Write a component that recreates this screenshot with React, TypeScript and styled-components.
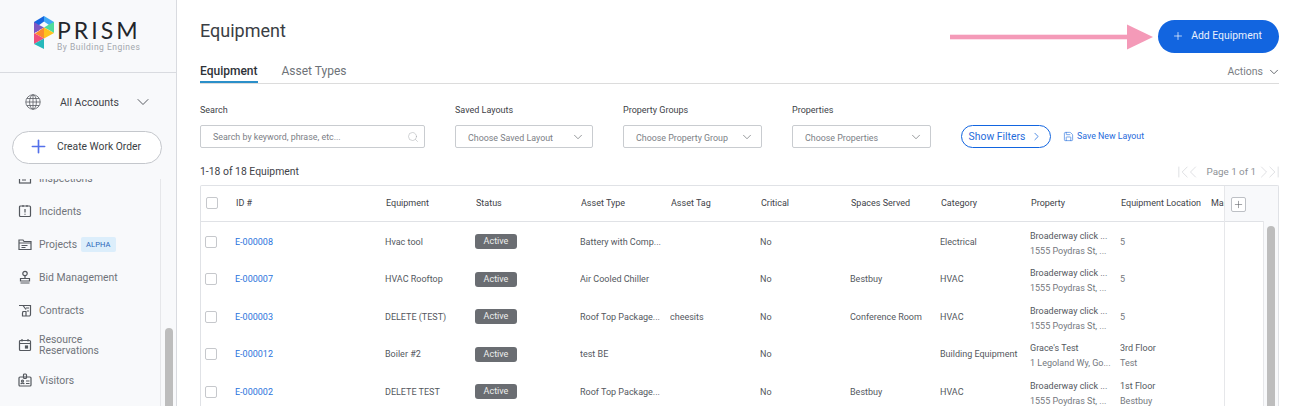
import React from "react";
import styled, { createGlobalStyle } from "styled-components";
import { ChevronDown, ChevronRight, ChevronLeft, ChevronFirst, ChevronLast, Plus, Search, Save } from "lucide-react";

const Global = createGlobalStyle`
  html, body { margin: 0; padding: 0; height: 406px; overflow: hidden; background: #fff; }
  body { font-family: Roboto, "Liberation Sans", sans-serif; color: #3a3f47; }
  * { box-sizing: border-box; }
`;

const Page = styled.div`
  display: flex;
  width: 1297px;
  height: 406px;
  overflow: hidden;
`;

const Sidebar = styled.aside`
  width: 177px;
  flex: none;
  display: flex;
  flex-direction: column;
  background: #f8f9fb;
  border-right: 1px solid #d9dbe0;
`;

const LogoArea = styled.div`
  height: 73px;
  flex: none;
  border-bottom: 1px solid #d9dbe0;
  display: flex;
  align-items: flex-start;
  padding: 16px 0 0 34px;
  gap: 3px;
`;

const LogoText = styled.div`
  display: flex;
  flex-direction: column;
`;

const LogoName = styled.span`
  font-family: Lato, sans-serif;
  font-size: 23px;
  line-height: 23px;
  margin-top: 3px;
  letter-spacing: 3px;
  color: #23262b;
`;

const LogoSub = styled.span`
  font-size: 8.5px;
  line-height: 9px;
  margin-top: 1px;
  letter-spacing: 0.5px;
  color: #a3a7ad;
  white-space: nowrap;
`;

const AccountRow = styled.div`
  height: 58px;
  flex: none;
  display: flex;
  align-items: center;
  padding-left: 25px;
  font-size: 10.5px;
  color: #3e4248;
`;

const GlobeIcon = styled.svg`
  width: 16px;
  height: 16px;
  flex: none;
  fill: none;
  stroke: #5a5e64;
  stroke-width: 0.8;
`;

const AccountName = styled.span`
  margin-left: 19px;
  width: 73px;
`;

const CreateWrap = styled.div`
  padding-left: 12px;
  flex: none;
`;

const CreateButton = styled.button`
  width: 150px;
  height: 33px;
  border-radius: 17px;
  border: 1px solid #c4c7cc;
  background: #fff;
  display: flex;
  align-items: center;
  padding: 0 0 2px 15px;
  font: 400 10.3px Roboto, sans-serif;
  color: #3a3e44;
  gap: 8px;
`;

const NavArea = styled.div`
  margin-top: 15px;
  height: 227px;
  flex: none;
  display: flex;
  overflow: hidden;
`;

const NavList = styled.nav`
  width: 161px;
  flex: none;
  border-right: 1px solid #e6e7ea;
  padding-left: 18px;
  display: flex;
  flex-direction: column;
`;

const NavScroller = styled.div`
  margin-top: -18px;
  display: flex;
  flex-direction: column;
`;

const NavItem = styled.div<{ $h: number }>`
  height: ${(p) => p.$h}px;
  flex: none;
  display: flex;
  align-items: center;
  gap: 7px;
  font-size: 10.4px;
  color: #70747a;
  line-height: 11px;
`;

const NavIcon = styled.svg`
  width: 14px;
  height: 14px;
  flex: none;
  fill: none;
  stroke: #54585e;
  stroke-width: 1.2;
`;

const Alpha = styled.span`
  background: #dceefb;
  color: #2a66b8;
  font-size: 7.5px;
  letter-spacing: 0.1px;
  padding: 0 5px;
  height: 15px;
  line-height: 15px;
  border-radius: 2px;
  margin-left: -3px;
`;

const NavTrack = styled.div`
  flex: 1;
  padding: 149px 0 0 4px;
`;

const NavThumb = styled.div`
  width: 8px;
  height: 90px;
  border-radius: 4px 4px 0 0;
  background: #bdbdbd;
`;

const Main = styled.main`
  flex: 1;
  min-width: 0;
  padding: 0 18px 0 23px;
  display: flex;
  flex-direction: column;
`;

const TitleRow = styled.div`
  height: 53px;
  flex: none;
  padding-top: 20px;
  display: flex;
  justify-content: space-between;
  align-items: flex-start;
`;

const Title = styled.h1`
  margin: 0;
  font-size: 18px;
  font-weight: 400;
  line-height: 21px;
  color: #3a3e44;
`;

const TitleActions = styled.div`
  display: flex;
  align-items: flex-start;
  gap: 5px;
`;

const Arrow = styled.svg`
  width: 203px;
  height: 28px;
  margin-top: 2.5px;
`;

const AddButton = styled.button`
  width: 121px;
  height: 33px;
  border: 0;
  border-radius: 17px;
  background: #1265e0;
  color: #e9f1fd;
  font: 400 10.4px Roboto, sans-serif;
  display: flex;
  align-items: center;
  justify-content: center;
  gap: 7px;
  padding: 0 3px 2px 0;
`;

const Tabs = styled.div`
  height: 31px;
  flex: none;
  display: flex;
  border-bottom: 1px solid #dcdcdc;
  align-items: flex-start;
  padding-top: 9px;
`;

const Tab = styled.div<{ $active?: boolean }>`
  font-size: 12px;
  line-height: 18px;
  height: 21px;
  margin-right: 24px;
  color: ${(p) => (p.$active ? "#2e3238" : "#6e7278")};
  font-weight: ${(p) => (p.$active ? 500 : 400)};
  border-bottom: ${(p) => (p.$active ? "2px solid #2b8fc9" : "none")};
`;

const Actions = styled.div`
  margin: 1px -2px 0 auto;
  font-size: 10.5px;
  line-height: 18px;
  color: #7a7e84;
  display: flex;
  align-items: center;
  gap: 4px;
`;

const Filters = styled.div`
  height: 79px;
  flex: none;
  display: flex;
  align-items: flex-start;
  padding-top: 20px;
`;

const Field = styled.div<{ $w: number; $mr: number }>`
  width: ${(p) => p.$w}px;
  margin-right: ${(p) => p.$mr}px;
  flex: none;
`;

const Label = styled.div`
  font-size: 9px;
  line-height: 12px;
  color: #3e4248;
  margin-bottom: 9px;
`;

const InputBox = styled.div<{ $search?: boolean }>`
  height: 23px;
  border: 1px solid #c9ccd0;
  border-radius: 2px;
  display: flex;
  align-items: center;
  justify-content: space-between;
  padding: 0 ${(p) => (p.$search ? 5.5 : 7)}px 0 12px;
  font-size: 8.9px;
  color: #7c8086;
`;

const SelectText = styled.span`
  padding-top: 2px;
`;

const ShowFilters = styled.button`
  width: 90px;
  height: 23px;
  margin: 21px 12px 0 0;
  border-radius: 12px;
  border: 1px solid #1265e0;
  background: #fff;
  color: #1f6bdb;
  font: 400 10.4px Roboto, sans-serif;
  display: flex;
  align-items: center;
  justify-content: center;
  gap: 5px;
  padding: 0 0 1px;
  flex: none;
`;

const SaveLink = styled.div`
  margin-top: 21px;
  height: 23px;
  padding-bottom: 1px;
  display: flex;
  align-items: center;
  gap: 3px;
  font-size: 8.8px;
  color: #1f6bdb;
`;

const CountRow = styled.div`
  height: 17px;
  flex: none;
  display: flex;
  align-items: center;
  justify-content: space-between;
  font-size: 10.4px;
  color: #3e4248;
`;

const Pager = styled.div`
  display: flex;
  align-items: center;
  font-size: 9.8px;
  color: #8d9196;
  svg { margin: 0 -5px; }
`;

const PageText = styled.span`
  margin: 0 3px 0 9px;
`;

const TableFrame = styled.div`
  margin-top: 5px;
  flex: 1;
  display: flex;
  border: 1px solid #e0e2e6;
  border-bottom: 0;
  border-radius: 2px 2px 0 0;
  overflow: hidden;
  min-height: 0;
`;

const TableArea = styled.div`
  width: 1023px;
  flex: none;
  overflow: hidden;
`;

const gridCols = "35px 150px 90px 105px 90px 90px 90px 90px 90px 90px 90px 90px";

const HeaderRow = styled.div`
  display: grid;
  grid-template-columns: ${gridCols};
  height: 36px;
  border-bottom: 1px solid #e0e2e6;
  align-items: center;
  font-size: 9px;
  color: #3e4248;
  padding-bottom: 1px;
  width: 1120px;
`;

const TableBody = styled.div`
  padding-top: 1px;
  margin-left: -1px;
`;

const BodyRow = styled.div`
  display: grid;
  grid-template-columns: ${gridCols};
  height: 37.5px;
  align-items: center;
  font-size: 9px;
  color: #54585e;
  width: 1120px;
`;

const Cell = styled.div`
  white-space: nowrap;
  overflow: hidden;
`;

const CheckCell = styled.div`
  padding-left: 5px;
`;

const Check = styled.div`
  width: 12px;
  height: 12px;
  border: 1px solid #c6c8cc;
  border-radius: 2px;
  background: #fff;
`;

const IdLink = styled.span`
  color: #2b74dc;
`;

const Badge = styled.span`
  display: inline-block;
  width: 42px;
  height: 15px;
  line-height: 15px;
  border-radius: 3px;
  text-align: center;
  background: #6a6d72;
  color: #eceded;
  font-size: 9px;
`;

const TwoLine = styled.div`
  display: flex;
  flex-direction: column;
  gap: 4px;
  line-height: 11px;
  padding-top: 4px;
`;

const Faded = styled.span`
  color: #74787e;
`;

const Pinned = styled.div`
  flex: 1;
  display: flex;
  flex-direction: column;
  border-left: 1px solid #e6e7ea;
`;

const PinnedHead = styled.div`
  height: 35px;
  flex: none;
  background: #f8f9fb;
  display: flex;
  align-items: center;
  padding: 2px 0 0 6px;
`;

const PlusBox = styled.div`
  width: 15px;
  height: 15px;
  border: 1px solid #bdc0c5;
  border-radius: 2px;
  background: #fff;
  color: #54585e;
  display: flex;
  align-items: center;
  justify-content: center;
`;

const PinnedBody = styled.div`
  flex: 1;
  display: flex;
`;

const PinnedSpacer = styled.div`
  flex: 1;
  border-top: 1px solid #e0e2e6;
`;

const TableTrack = styled.div`
  width: 15px;
  flex: none;
  border-left: 1px solid #e6e7ea;
  background: #f8f9fb;
  padding: 5px 3px 0;
`;

const TableThumb = styled.div`
  height: 100%;
  width: 8px;
  background: #bdbdbd;
  border-radius: 4px 4px 0 0;
`;

const PathList = ({ children }: { children: React.ReactNode }) => <NavIcon viewBox="0 0 14 14">{children}</NavIcon>;

const Logo = () => (
  <svg width="20" height="33" viewBox="0 0 20 33">
    <polygon points="0,6 10,0 10,5.5 4.5,9.5 0,11.5" fill="#1565e0" />
    <polygon points="10,0 20,6 20,11 15,9 10,5.5" fill="#3fa9f5" />
    <polygon points="0,6 0,17 5,14.5 5,9" fill="#7e57c2" />
    <polygon points="20,6 20,17 15,14 10,11.5 15,8.5" fill="#4fdc9c" />
    <polygon points="0,17 10,11.5 5,9 0,12" fill="#7e57c2" />
    <polygon points="1,17.5 10,11.5 10,22.5" fill="#fb8c2c" />
    <polygon points="10,11.5 20,17 10,22.5" fill="#ffc21c" />
    <polygon points="0,17 10,22.5 0,28" fill="#f0507a" />
    <polygon points="10,22.5 10,33 0,28" fill="#26b8bb" />
  </svg>
);

type Row = {
  id: string; eq: string; type: string; tag?: string; spaces?: string; cat: string;
  p1: string; p2: string; l1: string; l2?: string;
};

const rows: Row[] = [
  { id: "E-000008", eq: "Hvac tool", type: "Battery with Comp...", cat: "Electrical", p1: "Broaderway click ...", p2: "1555 Poydras St, ...", l1: "5" },
  { id: "E-000007", eq: "HVAC Rooftop", type: "Air Cooled Chiller", spaces: "Bestbuy", cat: "HVAC", p1: "Broaderway click ...", p2: "1555 Poydras St, ...", l1: "5" },
  { id: "E-000003", eq: "DELETE (TEST)", type: "Roof Top Package...", tag: "cheesits", spaces: "Conference Room", cat: "HVAC", p1: "Broaderway click ...", p2: "1555 Poydras St, ...", l1: "5" },
  { id: "E-000012", eq: "Boiler #2", type: "test BE", cat: "Building Equipment", p1: "Grace's Test", p2: "1 Legoland Wy, Go...", l1: "3rd Floor", l2: "Test" },
  { id: "E-000002", eq: "DELETE TEST", type: "Roof Top Package...", spaces: "Bestbuy", cat: "HVAC", p1: "Broaderway click ...", p2: "1555 Poydras St, ...", l1: "1st Floor", l2: "Bestbuy" },
];

const heads = ["ID #", "Equipment", "Status", "Asset Type", "Asset Tag", "Critical", "Spaces Served", "Category", "Property", "Equipment Location", "Manufacturer"];

const selects = [
  { label: "Saved Layouts", text: "Choose Saved Layout", w: 138, mr: 30 },
  { label: "Property Groups", text: "Choose Property Group", w: 139, mr: 30 },
  { label: "Properties", text: "Choose Properties", w: 139, mr: 30 },
];

export default function App() {
  return (
    <Page>
      <Global />
      <Sidebar>
        <LogoArea>
          <Logo />
          <LogoText>
            <LogoName>PRISM</LogoName>
            <LogoSub>By Building Engines</LogoSub>
          </LogoText>
        </LogoArea>
        <AccountRow>
          <GlobeIcon viewBox="0 0 16 16">
            <circle cx="8" cy="8" r="7.2" />
            <ellipse cx="8" cy="8" rx="3.4" ry="7.2" />
            <path d="M8 .8v14.4M.8 8h14.4M1.8 4.5h12.4M1.8 11.5h12.4" />
          </GlobeIcon>
          <AccountName>All Accounts</AccountName>
          <ChevronDown size={20} strokeWidth={1.1} color="#4a4e54" />
        </AccountRow>
        <CreateWrap>
          <CreateButton>
            <Plus size={21} strokeWidth={1.9} color="#5470ea" />
            Create Work Order
          </CreateButton>
        </CreateWrap>
        <NavArea>
          <NavList>
            <NavScroller>
              <NavItem $h={34}>
                <PathList><rect x="1.5" y="2.5" width="11" height="9.5" /><path d="M4 6h6M4 9h4" /></PathList>
                Inspections
              </NavItem>
              <NavItem $h={32.5}>
                <PathList><rect x="1.5" y="2" width="11" height="10.5" rx="1" /><path d="M5 1v2M9 1v2M7 5v3.6M7 9.8v1" /></PathList>
                Incidents
              </NavItem>
              <NavItem $h={33}>
                <PathList><path d="M1 3h4l1 1.5h7v8H1z" /><path d="M1 6h12M3.5 8.5h6M3.5 10.5h4" /></PathList>
                Projects <Alpha>ALPHA</Alpha>
              </NavItem>
              <NavItem $h={33}>
                <PathList><circle cx="7" cy="3.5" r="2.2" /><path d="M7 5.7v2.8M2.5 8.5h9v2.5h-9zM2.5 13h9" /></PathList>
                Bid Management
              </NavItem>
              <NavItem $h={33}>
                <PathList><path d="M4 2.5h8.5v9a1.5 1.5 0 0 1-1.5 1.5H5M1 2.5h4l3 4M5 8.5h3v4.5H4.5v-3z" /><path d="M8 5h3M9 8h2" /></PathList>
                Contracts
              </NavItem>
              <NavItem $h={36.5}>
                <PathList><rect x="1.5" y="2.5" width="11" height="10" rx="1" /><path d="M4 1v2.5M10 1v2.5M1.5 5.5h11" /><rect x="7.5" y="8" width="2" height="2" fill="#54585e" /></PathList>
                <span>Resource<br />Reservations</span>
              </NavItem>
              <NavItem $h={34}>
                <PathList><rect x="1" y="4" width="12" height="9" rx="1" /><rect x="5.5" y="1" width="3" height="4.5" rx="1" /><circle cx="4.5" cy="8" r="1" /><path d="M2.8 11.2c.4-1.4 3-1.4 3.4 0M8 8h3.5M8 10.5h3.5" /></PathList>
                Visitors
              </NavItem>
            </NavScroller>
          </NavList>
          <NavTrack><NavThumb /></NavTrack>
        </NavArea>
      </Sidebar>
      <Main>
        <TitleRow>
          <Title>Equipment</Title>
          <TitleActions>
            <Arrow viewBox="0 0 203 28">
              <rect x="0" y="11.7" width="180" height="4.6" fill="#f49ab8" />
              <polygon points="177,1.5 203,14 177,26.5" fill="#f49ab8" />
            </Arrow>
            <AddButton>
              <Plus size={12} strokeWidth={1.4} color="#fff" />
              Add Equipment
            </AddButton>
          </TitleActions>
        </TitleRow>
        <Tabs>
          <Tab $active>Equipment</Tab>
          <Tab>Asset Types</Tab>
          <Actions>Actions <ChevronDown size={14} strokeWidth={1.5} color="#54585e" /></Actions>
        </Tabs>
        <Filters>
          <Field $w={225} $mr={30}>
            <Label>Search</Label>
            <InputBox $search>
              Search by keyword, phrase, etc...
              <Search size={12} strokeWidth={1} color="#a5a8ad" />
            </InputBox>
          </Field>
          {selects.map((s) => (
            <Field key={s.label} $w={s.w} $mr={s.mr}>
              <Label>{s.label}</Label>
              <InputBox>
                <SelectText>{s.text}</SelectText>
                <ChevronDown size={14} strokeWidth={1.1} color="#5e6268" />
              </InputBox>
            </Field>
          ))}
          <ShowFilters>Show Filters <ChevronRight size={13} strokeWidth={1.4} /></ShowFilters>
          <SaveLink><Save size={11} strokeWidth={1.3} /> Save New Layout</SaveLink>
        </Filters>
        <CountRow>
          1-18 of 18 Equipment
          <Pager>
            <ChevronFirst size={20} strokeWidth={1} color="#d8dadd" />
            <ChevronLeft size={20} strokeWidth={1} color="#d8dadd" />
            <PageText>Page 1 of 1</PageText>
            <ChevronRight size={20} strokeWidth={1} color="#d8dadd" />
            <ChevronLast size={20} strokeWidth={1} color="#d8dadd" />
          </Pager>
        </CountRow>
        <TableFrame>
          <TableArea>
            <HeaderRow>
              <CheckCell><Check /></CheckCell>
              {heads.map((h) => <Cell key={h}>{h}</Cell>)}
            </HeaderRow>
            <TableBody>
              {rows.map((r) => (
                <BodyRow key={r.id}>
                  <CheckCell><Check /></CheckCell>
                  <Cell><IdLink>{r.id}</IdLink></Cell>
                  <Cell>{r.eq}</Cell>
                  <Cell><Badge>Active</Badge></Cell>
                  <Cell>{r.type}</Cell>
                  <Cell>{r.tag}</Cell>
                  <Cell>No</Cell>
                  <Cell>{r.spaces}</Cell>
                  <Cell>{r.cat}</Cell>
                  <TwoLine><Cell>{r.p1}</Cell><Faded>{r.p2}</Faded></TwoLine>
                  {r.l2 ? <TwoLine><Cell>{r.l1}</Cell><Faded>{r.l2}</Faded></TwoLine> : <Cell><Faded>{r.l1}</Faded></Cell>}
                  <Cell />
                </BodyRow>
              ))}
            </TableBody>
          </TableArea>
          <Pinned>
            <PinnedHead><PlusBox><Plus size={11} strokeWidth={1.2} /></PlusBox></PinnedHead>
            <PinnedBody>
              <PinnedSpacer />
              <TableTrack><TableThumb /></TableTrack>
            </PinnedBody>
          </Pinned>
        </TableFrame>
      </Main>
    </Page>
  );
}
